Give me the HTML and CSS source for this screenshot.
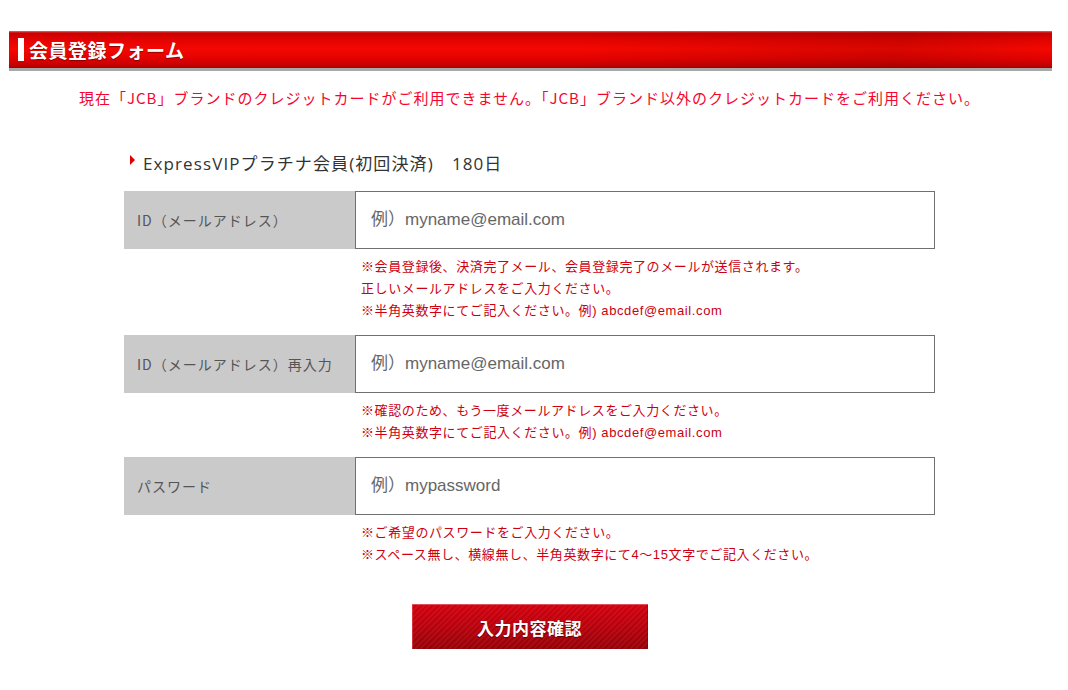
FILE: index.html
```html
<!DOCTYPE html>
<html lang="ja">
<head>
    <meta charset="UTF-8">
    <meta name="viewport" content="width=device-width, initial-scale=1.0">
    <title>会員登録フォーム</title>
    <link rel="stylesheet" href="styles.css">
</head>
<body>
    <div class="wrap">
        <h2 class="page-title"><span class="title-mark"></span>会員登録フォーム</h2>
        <p class="notice">現在「JCB」ブランドのクレジットカードがご利用できません。「JCB」ブランド以外のクレジットカードをご利用ください。</p>

        <form class="reg-form" onsubmit="return false;">
            <p class="plan"><span class="plan-arrow"></span>ExpressVIPプラチナ会員(初回決済)　180日</p>

            <div class="form-row">
                <label class="form-label" for="mail">ID（メールアドレス）</label>
                <div class="form-field">
                    <input type="text" id="mail" placeholder="例）myname@email.com">
                </div>
            </div>
            <div class="form-notes">
                <p>※会員登録後、決済完了メール、会員登録完了のメールが送信されます。</p>
                <p>正しいメールアドレスをご入力ください。</p>
                <p>※半角英数字にてご記入ください。例) abcdef@email.com</p>
            </div>

            <div class="form-row">
                <label class="form-label" for="mail2">ID（メールアドレス）再入力</label>
                <div class="form-field">
                    <input type="text" id="mail2" placeholder="例）myname@email.com">
                </div>
            </div>
            <div class="form-notes">
                <p>※確認のため、もう一度メールアドレスをご入力ください。</p>
                <p>※半角英数字にてご記入ください。例) abcdef@email.com</p>
            </div>

            <div class="form-row">
                <label class="form-label" for="pass">パスワード</label>
                <div class="form-field">
                    <input type="text" id="pass" placeholder="例）mypassword">
                </div>
            </div>
            <div class="form-notes">
                <p>※ご希望のパスワードをご入力ください。</p>
                <p>※スペース無し、横線無し、半角英数字にて4～15文字でご記入ください。</p>
            </div>

            <div class="form-submit">
                <button type="submit" class="btn-confirm">入力内容確認</button>
            </div>
        </form>
    </div>
</body>
</html>
```

FILE: styles.css
```css
body {
    margin: 0;
    background-color: #fff;
    font-family: "Noto Sans CJK JP", "Noto Sans", sans-serif;
    color: #333;
}
.wrap {
    width: 1043px;
    margin: 0 0 0 9px;
    padding-top: 31px;
}
.page-title {
    display: flex;
    align-items: center;
    gap: 5px;
    height: 37px;
    margin: 0;
    padding-left: 9px;
    color: #fff;
    font-size: 19px;
    font-weight: bold;
    letter-spacing: 0.5px;
    text-shadow: 0 1px 1px rgba(80, 0, 0, 0.6);
    background:
        linear-gradient(100deg, rgba(0, 0, 0, 0) 55%, rgba(90, 0, 0, 0.18) 85%, rgba(0, 0, 0, 0) 100%),
        linear-gradient(to bottom, #e46a6a 0px, #c80000 2px, #e60400 10px, #f40800 18px, #e00200 28px, #c00000 35px, #a00000 37px);
    box-shadow: 0 3px 0 #a8a8a8;
}
.title-mark {
    width: 6px;
    height: 23px;
    background-color: #fff;
}
.notice {
    margin: 18px 0 0;
    text-align: center;
    color: #f5052d;
    font-size: 15px;
    letter-spacing: 1px;
    line-height: 24px;
    padding-right: 2px;
}
.reg-form {
    width: 811px;
    margin: 0 0 0 115px;
    padding-top: 42px;
}
.plan {
    display: flex;
    align-items: center;
    margin: 0 0 15px 6px;
    font-family: "Open Sans", "Noto Sans CJK JP", sans-serif;
    font-size: 17px;
    letter-spacing: 1.1px;
    line-height: 24px;
    color: #333;
}
.plan-arrow {
    width: 0;
    height: 0;
    margin: -8px 8px 0 0;
    border-left: 5px solid #e00000;
    border-top: 5px solid transparent;
    border-bottom: 5px solid transparent;
}
.form-row {
    display: flex;
    height: 58px;
}
.form-label {
    display: flex;
    align-items: center;
    width: 231px;
    padding-left: 13px;
    box-sizing: border-box;
    background-color: #cacaca;
    color: #555;
    font-size: 14px;
    letter-spacing: 1px;
}
.form-field {
    flex: 1;
}
.form-field input {
    width: 100%;
    height: 100%;
    box-sizing: border-box;
    border: 1px solid #707070;
    padding: 0 15px;
    font-family: "Liberation Sans", "Noto Sans CJK JP", sans-serif;
    font-size: 17px;
    color: #333;
    outline: none;
}
.form-field input::placeholder {
    color: #666;
}
.form-notes {
    padding: 7px 0 13px 237px;
    font-family: "Liberation Sans", "Noto Sans CJK JP", sans-serif;
    font-size: 13px;
    letter-spacing: 0.6px;
    line-height: 22px;
    color: #cc0010;
}
.form-notes p {
    margin: 0;
}
.form-submit {
    display: flex;
    justify-content: center;
    padding-top: 25px;
}
.btn-confirm {
    width: 236px;
    height: 45px;
    border: none;
    border-top: 1px solid #e0505a;
    color: #fff;
    font-family: "Noto Sans CJK JP", sans-serif;
    font-size: 17px;
    font-weight: bold;
    letter-spacing: 0.5px;
    text-shadow: 0 1px 1px rgba(60, 0, 0, 0.7);
    cursor: pointer;
    background:
        repeating-linear-gradient(135deg, rgba(255, 255, 255, 0.05) 0px, rgba(255, 255, 255, 0.05) 2px, rgba(0, 0, 0, 0) 2px, rgba(0, 0, 0, 0) 4px),
        linear-gradient(to bottom, #d2000e 0%, #b8000c 50%, #960008 100%);
    box-shadow: inset 1px 0 0 rgba(255, 120, 120, 0.4), inset -1px 0 0 rgba(80, 0, 0, 0.3);
}
```
